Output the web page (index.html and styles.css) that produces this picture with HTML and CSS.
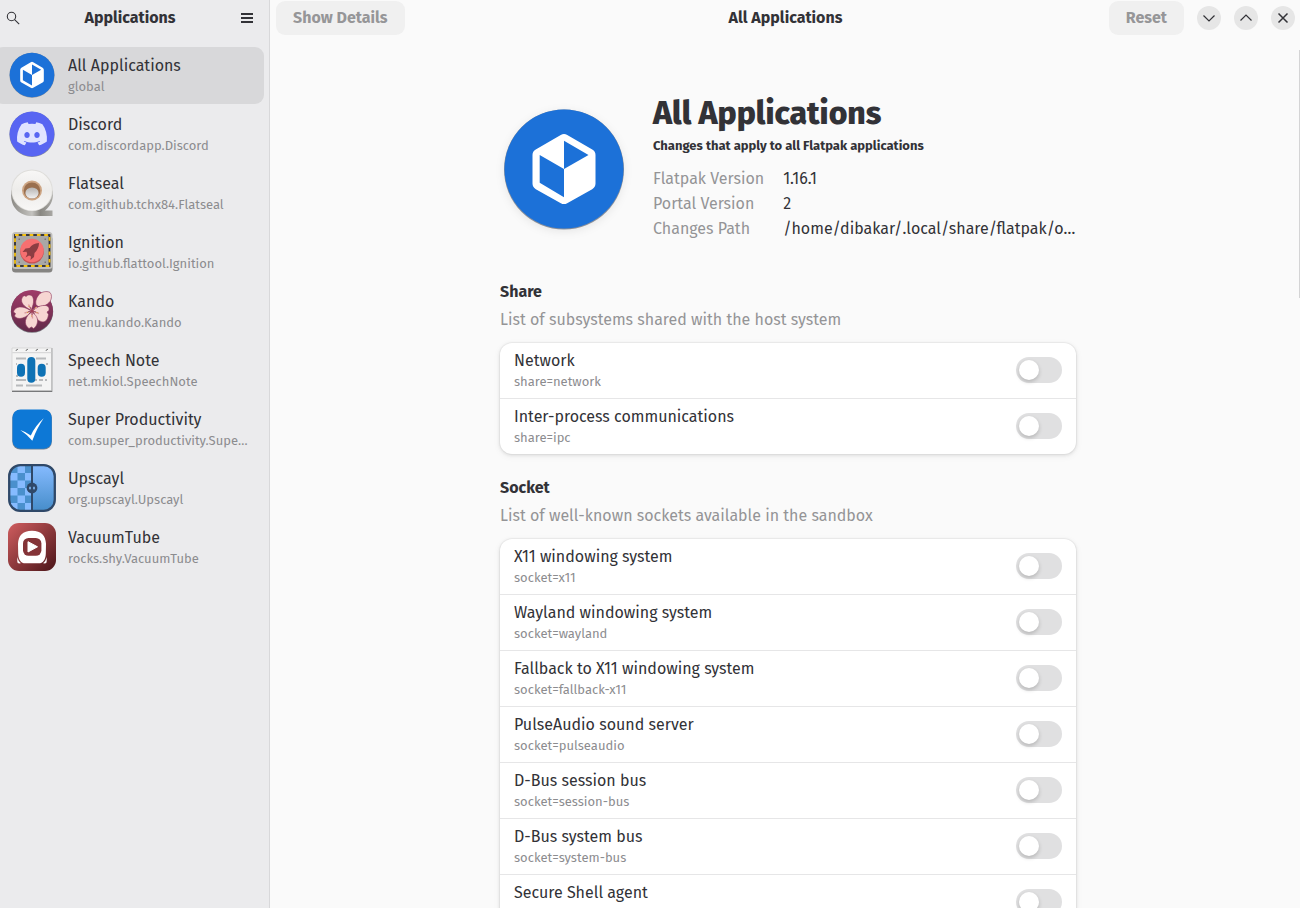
FILE: index.html
```html
<!DOCTYPE html>
<html lang="en">
<head>
    <meta charset="UTF-8">
    <meta name="viewport" content="width=device-width, initial-scale=1.0">
    <title>Flatseal</title>
    <link rel="stylesheet" href="styles.css">
</head>
<body>
    <svg class="defs" aria-hidden="true">
        <defs>
            <symbol id="flatpak" viewBox="0 0 128 128">
                <circle cx="64" cy="64.500" r="60" fill="#8a8f98"/>
                <circle cx="64" cy="64" r="59.5" fill="#1c71d8"/>
                <path d="M64 35.5 89 50v28.5L64 92.5 39 78.5V50z" fill="#fff" stroke="#fff" stroke-width="13" stroke-linejoin="round"/>
                <path d="M64 35.7 88.5 50 64 64zM39.7 50 64 64v28.3L39.7 77.7z" fill="#1c71d8"/>
            </symbol>
        </defs>
    </svg>

    <div class="window">
        <aside class="sidebar">
            <header class="sidebar-header">
                <button class="icon-btn" aria-label="Search">
                    <svg width="16" height="16" viewBox="0 0 16 16" fill="none" stroke="#323237" stroke-width="1.1"><circle cx="6.5" cy="6.5" r="4.2"/><path d="m9.6 9.6 4.6 4.6"/></svg>
                </button>
                <h2>Applications</h2>
                <button class="icon-btn" aria-label="Menu">
                    <svg width="16" height="16" viewBox="0 0 16 16" fill="#323237"><path d="M2 3h12v2H2zM2 7h12v2H2zM2 11h12v2H2z"/></svg>
                </button>
            </header>
            <nav class="app-list">
                <a class="app selected" href="#">
                    <svg class="app-icon" viewBox="0 0 48 48"><use href="#flatpak"/></svg>
                    <span class="labels"><span class="name">All Applications</span><span class="sub">global</span></span>
                </a>
                <a class="app" href="#">
                    <svg class="app-icon" viewBox="0 0 48 48">
                        <circle cx="24" cy="24.4" r="22.6" fill="#8a8f98"/>
                        <circle cx="24" cy="24" r="22.4" fill="#5865f2"/>
                        <path transform="translate(9 8.8) scale(1.25)" fill="#e0e3ff" d="M20.317 4.37a19.8 19.8 0 0 0-4.885-1.515.074.074 0 0 0-.079.037c-.21.375-.444.865-.608 1.25a18.3 18.3 0 0 0-5.487 0c-.163-.394-.405-.875-.617-1.25a.077.077 0 0 0-.079-.037A19.7 19.7 0 0 0 3.677 4.37a.07.07 0 0 0-.032.027C.533 9.046-.319 13.58.099 18.058a.082.082 0 0 0 .031.056c2.053 1.508 4.041 2.423 5.993 3.03a.078.078 0 0 0 .084-.028c.462-.63.873-1.295 1.226-1.994a.076.076 0 0 0-.042-.106 13 13 0 0 1-1.872-.892.077.077 0 0 1-.008-.128c.126-.094.252-.192.372-.291a.074.074 0 0 1 .078-.011c3.928 1.793 8.18 1.793 12.061 0a.074.074 0 0 1 .079.01c.12.099.246.198.373.292a.077.077 0 0 1-.007.128 12.3 12.3 0 0 1-1.873.891.077.077 0 0 0-.041.107c.36.698.772 1.363 1.225 1.993a.076.076 0 0 0 .084.029c1.961-.607 3.95-1.522 6.003-3.03a.077.077 0 0 0 .031-.055c.5-5.177-.838-9.674-3.549-13.66a.061.061 0 0 0-.03-.029zM8.02 15.331c-1.183 0-2.157-1.086-2.157-2.419s.955-2.419 2.157-2.419c1.21 0 2.176 1.095 2.157 2.419 0 1.333-.956 2.419-2.157 2.419zm7.975 0c-1.183 0-2.157-1.086-2.157-2.419s.955-2.419 2.157-2.419c1.21 0 2.176 1.095 2.157 2.419 0 1.333-.946 2.419-2.157 2.419z"/>
                    </svg>
                    <span class="labels"><span class="name">Discord</span><span class="sub">com.discordapp.Discord</span></span>
                </a>
                <a class="app" href="#">
                    <svg class="app-icon" viewBox="0 0 48 48">
                        <defs>
                            <linearGradient id="tape"><stop offset="0" stop-color="#8b8984"/><stop offset=".5" stop-color="#c4c3c0"/><stop offset=".7" stop-color="#888681"/><stop offset="1" stop-color="#a9a8a4"/></linearGradient>
                            <linearGradient id="roll" x2="0" y2="1"><stop offset="0" stop-color="#f8f7f6"/><stop offset=".5" stop-color="#edecea"/><stop offset="1" stop-color="#f8f7f6"/></linearGradient>
                            <linearGradient id="hole" x2="0" y2="1"><stop offset="0" stop-color="#b5b2b0"/><stop offset="1" stop-color="#f2f2f3"/></linearGradient>
                        </defs>
                        <path d="M3.200 21v6c0 12 9 20 21 20h20.300v-5.500H37c5-4 7.800-9 7.800-15v-5z" fill="url(#tape)"/>
                        <circle cx="24" cy="21.300" r="20.800" fill="#deddda"/>
                        <circle cx="24" cy="21.500" r="19.900" fill="url(#roll)"/>
                        <circle cx="24" cy="21.500" r="10" fill="#cda583"/>
                        <circle cx="24" cy="21.700" r="8.300" fill="#9a6f4e"/>
                        <ellipse cx="24" cy="24" rx="6.600" ry="5.600" fill="url(#hole)"/>
                    </svg>
                    <span class="labels"><span class="name">Flatseal</span><span class="sub">com.github.tchx84.Flatseal</span></span>
                </a>
                <a class="app" href="#">
                    <svg class="app-icon" viewBox="0 0 48 48">
                        <rect x="4" y="8" width="40.500" height="36.500" rx="3.500" fill="#858482"/>
                        <rect x="4" y="4" width="40.500" height="37" rx="3.500" fill="#c0bfbc"/>
                        <rect x="7" y="7" width="34.500" height="31" fill="#a9a8a6" stroke="#2f2d31" stroke-width="1.800"/>
                        <rect x="7" y="7" width="34.500" height="31" fill="none" stroke="#f5c211" stroke-width="1.800" stroke-dasharray="3.700 3.600"/>
                        <path d="M10.500 10.500H12V12h-1.500zM36.500 10.500H38V12h-1.500zM10.500 33.500H12V35h-1.500zM36.500 33.500H38V35h-1.500z" fill="#77757a"/>
                        <circle cx="24" cy="23.800" r="11.800" fill="#c75052"/>
                        <circle cx="24" cy="22.500" r="11.700" fill="#f66f70"/>
                        <path d="M31 15c-4.500.2-7.500 2-9.500 5l-4 .5-3 3.500 4-.3.800 2.300-1.800 3.500 3.500-2 2 1-.5 3.500 3.500-3 .5-4c2.700-2.500 4.500-6 4.500-10z" fill="#8d3d42"/>
                    </svg>
                    <span class="labels"><span class="name">Ignition</span><span class="sub">io.github.flattool.Ignition</span></span>
                </a>
                <a class="app" href="#">
                    <svg class="app-icon" viewBox="0 0 48 48">
                        <defs><linearGradient id="plum" x2="0" y2="1"><stop offset="0" stop-color="#a03c69"/><stop offset="1" stop-color="#622a49"/></linearGradient></defs>
                        <circle cx="24" cy="24.600" r="21.200" fill="#77757c"/>
                        <circle cx="24" cy="24" r="21" fill="url(#plum)"/>
                        <g fill="#f7d6d2" stroke="#8b365c" stroke-width=".6">
                            <path d="M23 23c-7-3-11-8-9-12 1-2.500 3-3 4-1.500C19 8 22 7 24.500 9.500c2 3.500 1 8.500-1.500 13.500z"/>
                            <path d="M28 17.500c-1-4 1-8 4-11 4-2.500 8-2.300 10-1 2 2 2 6 0 9-3 4-8 5.500-12 5z"/>
                            <path d="M25 24c3-4 8-6 13-5.500 2.500.5 3.500 2.500 3 5l-2 1.500 1.500 2.500c-.5 4-2 7-5.500 7.500-5-.5-8.500-5-10-11z"/>
                            <path d="M24 25c4 3 6 6 5.500 10-.5 3-2 5.500-4 6.500l-2-1.500-2.500 1.500c-3-2-4-5-3.500-8 1-4 3-6.500 6.500-8.500z"/>
                            <path d="M23 24c-4-3-9-5-13.500-3.500-2.500 1-3.500 2.500-4 4.500l2 1.500-1 2.500c1.500 2.500 5 3 8 2 4-1 7-4 8.500-7z"/>
                        </g>
                        <path d="m24 24-3.500-6.500m3.500 6.500 5-4m-5 4 7 2.500m-7-2.500.5 7.500m-.5-7.500-7.500 2" stroke="#dc9ca2" stroke-width="1.400" fill="none"/>
                        <path d="m24 24-2-4m2 4 3-2.500m-3 2.500 4 1m-4-1v4m0-4-4 .8m4-.8 2.500 3m-2.500-3-3 3" stroke="#8a3d55" stroke-width=".8" fill="none"/>
                        <circle cx="24" cy="24" r="1.600" fill="#a33f57"/>
                        <path d="M20.500 19h1v1h-1zM27 20h1v1h-1zM28.500 25h1v1h-1zM23 28.500h1v1h-1zM19 25h1v1h-1z" fill="#d79b3d"/>
                    </svg>
                    <span class="labels"><span class="name">Kando</span><span class="sub">menu.kando.Kando</span></span>
                </a>
                <a class="app" href="#">
                    <svg class="app-icon" viewBox="0 0 48 48">
                        <path d="M4 2h40.300v44H4z" fill="#77787a"/>
                        <path d="M4 2h39.500v42.500H4z" fill="#f4f4f4" stroke="#c9c9ca" stroke-width=".6"/>
                        <path d="M4.300 6.700h39" stroke="#d2d2d3"/>
                        <path d="M8 5q0-1.700 2-1.700M18 5q0-1.700 2-1.700M28 5q0-1.700 2-1.700M38 5q0-1.700 2-1.700" stroke="#77787a" stroke-width="1" fill="none"/>
                        <path d="M8 12.500h10M28 12.500h10M8 34h10M21 34h8M31 34h4M37 34h2M8 39.500h7M18 39.500h16M8 18h1M38 18h2M8 30h2" stroke="#b8babc" stroke-width="2"/>
                        <rect x="9" y="17.700" width="8" height="13" rx="4" fill="#0e72b5"/>
                        <rect x="19.300" y="11" width="8" height="25.700" rx="4" fill="#0e72b5"/>
                        <rect x="29.700" y="17.700" width="8" height="13" rx="4" fill="#0e72b5"/>
                    </svg>
                    <span class="labels"><span class="name">Speech Note</span><span class="sub">net.mkiol.SpeechNote</span></span>
                </a>
                <a class="app" href="#">
                    <svg class="app-icon" viewBox="0 0 48 48">
                        <rect x="4.300" y="5" width="39.600" height="39.500" rx="8" fill="#6f8195"/>
                        <rect x="4.500" y="4.500" width="39.200" height="39.200" rx="8" fill="#0d78d6"/>
                        <path d="M12.300 25q6 2 10.500 5.500Q27 21 35.700 13.300 29 23 24.300 35.700 19 29.500 12.300 25z" fill="#fff"/>
                    </svg>
                    <span class="labels"><span class="name">Super Productivity</span><span class="sub">com.super_productivity.SuperProductivity</span></span>
                </a>
                <a class="app" href="#">
                    <svg class="app-icon" viewBox="0 0 48 48">
                        <defs>
                            <linearGradient id="sky" x2="0" y2="1"><stop offset="0" stop-color="#86bbff"/><stop offset="1" stop-color="#468dca"/></linearGradient>
                            <clipPath id="pane"><path d="M24 1.500H12A10.500 10.500 0 0 0 1.500 12v24A10.500 10.500 0 0 0 12 46.500h12z"/></clipPath>
                        </defs>
                        <rect x="1.200" y="1.200" width="45.600" height="45.600" rx="11" fill="url(#sky)"/>
                        <g clip-path="url(#pane)">
                            <path d="M0 0h24v48H0z" fill="#4a90cd"/>
                            <path d="M9.500 1.500H17V9H9.500zM2 9h7.500v7.500H2zM17 9h7v7.500h-7zM9.500 16.500H17V24H9.500zM2 24h7.500v7.500H2zM17 24h7v7.500h-7zM9.500 31.500H17V39H9.500zM2 39h7.500v7.500H2zM17 39h7v7.500h-7z" fill="#86bbff"/>
                        </g>
                        <path d="M24 1v46" stroke="#2f4868" stroke-width="2"/>
                        <rect x="1.200" y="1.200" width="45.600" height="45.600" rx="11" fill="none" stroke="#2f4868" stroke-width="2.300"/>
                        <circle cx="24" cy="24" r="5.400" fill="#2f4868"/>
                        <ellipse cx="22" cy="24" rx="1" ry="1.600" fill="#79aee6"/>
                        <ellipse cx="26" cy="24" rx="1" ry="1.600" fill="#79aee6"/>
                    </svg>
                    <span class="labels"><span class="name">Upscayl</span><span class="sub">org.upscayl.Upscayl</span></span>
                </a>
                <a class="app" href="#">
                    <svg class="app-icon" viewBox="0 0 48 48">
                        <defs><linearGradient id="brick" x2="1" y2="1"><stop offset="0" stop-color="#d05d5f"/><stop offset="1" stop-color="#4b1519"/></linearGradient></defs>
                        <rect width="48" height="48" rx="11" fill="url(#brick)"/>
                        <path d="M24 7.700c9.500 0 13.500 5 14 13l-.2 10c-.2 6-3 9.600-7 9.600H17.200c-4 0-6.800-3.600-7-9.600l-.2-10c.5-8 4.500-13 14-13z" fill="#fff"/>
                        <path d="M9.500 34c-.5 3-.3 5.500.5 6.300 1 .2 2 .2 3 0-2-1.500-3-3.500-3.500-6.300zM38.500 34c.5 3 .3 5.500-.5 6.300-1 .2-2 .2-3 0 2-1.500 3-3.500 3.500-6.300z" fill="#fff"/>
                        <rect x="15" y="15" width="18.400" height="17.800" rx="5.500" fill="#843337"/>
                        <path d="m20 18.700 9.500 5.100L20 29z" fill="#fff" stroke="#fff" stroke-linejoin="round"/>
                    </svg>
                    <span class="labels"><span class="name">VacuumTube</span><span class="sub">rocks.shy.VacuumTube</span></span>
                </a>
            </nav>
        </aside>

        <main class="content">
            <header class="content-header">
                <div class="side"><button class="text-btn" disabled>Show Details</button></div>
                <h2>All Applications</h2>
                <div class="side end">
                    <button class="text-btn" disabled>Reset</button>
                    <button class="round-btn" aria-label="Minimize"><svg viewBox="0 0 24 24"><path d="m6.500 9.500 5.500 5.500 5.500-5.500"/></svg></button>
                    <button class="round-btn" aria-label="Maximize"><svg viewBox="0 0 24 24"><path d="M6.500 14.500 12 9l5.500 5.500"/></svg></button>
                    <button class="round-btn" aria-label="Close"><svg viewBox="0 0 24 24"><path stroke-width="1.500" d="m7.500 7.500 9 9m0-9-9 9"/></svg></button>
                </div>
            </header>

            <div class="page">
                <section class="app-info">
                    <svg class="big-icon" viewBox="0 0 128 128"><use href="#flatpak"/></svg>
                    <div class="info">
                        <h1>All Applications</h1>
                        <p class="tagline">Changes that apply to all Flatpak applications</p>
                        <dl>
                            <dt>Flatpak Version</dt><dd>1.16.1</dd>
                            <dt>Portal Version</dt><dd>2</dd>
                            <dt>Changes Path</dt><dd>/home/dibakar/.local/share/flatpak/overrides/global</dd>
                        </dl>
                    </div>
                </section>

                <section class="group">
                    <h3>Share</h3>
                    <p class="desc">List of subsystems shared with the host system</p>
                    <div class="card">
                        <label class="row"><span class="labels"><span class="name">Network</span><span class="sub">share=network</span></span><input type="checkbox" class="switch"></label>
                        <label class="row"><span class="labels"><span class="name">Inter-process communications</span><span class="sub">share=ipc</span></span><input type="checkbox" class="switch"></label>
                    </div>
                </section>

                <section class="group">
                    <h3>Socket</h3>
                    <p class="desc">List of well-known sockets available in the sandbox</p>
                    <div class="card">
                        <label class="row"><span class="labels"><span class="name">X11 windowing system</span><span class="sub">socket=x11</span></span><input type="checkbox" class="switch"></label>
                        <label class="row"><span class="labels"><span class="name">Wayland windowing system</span><span class="sub">socket=wayland</span></span><input type="checkbox" class="switch"></label>
                        <label class="row"><span class="labels"><span class="name">Fallback to X11 windowing system</span><span class="sub">socket=fallback-x11</span></span><input type="checkbox" class="switch"></label>
                        <label class="row"><span class="labels"><span class="name">PulseAudio sound server</span><span class="sub">socket=pulseaudio</span></span><input type="checkbox" class="switch"></label>
                        <label class="row"><span class="labels"><span class="name">D-Bus session bus</span><span class="sub">socket=session-bus</span></span><input type="checkbox" class="switch"></label>
                        <label class="row"><span class="labels"><span class="name">D-Bus system bus</span><span class="sub">socket=system-bus</span></span><input type="checkbox" class="switch"></label>
                        <label class="row"><span class="labels"><span class="name">Secure Shell agent</span><span class="sub">socket=ssh-auth</span></span><input type="checkbox" class="switch"></label>
                    </div>
                </section>
            </div>
            <div class="scroll-thumb"></div>
        </main>
    </div>
</body>
</html>
```

FILE: styles.css
```css
* {
    box-sizing: border-box;
}
body {
    margin: 0;
    background-color: #fafafa;
    color: #323237;
    font-family: "Fira Sans", "Noto Sans", sans-serif;
    font-size: 16px;
    line-height: 20px;
}
h1, h2, h3, p, dl, dd {
    margin: 0;
}
button {
    border: none;
    padding: 0;
    font: inherit;
    color: inherit;
    background: none;
}
svg {
    display: block;
}
.defs {
    position: absolute;
    width: 0;
    height: 0;
}
.window {
    display: flex;
    height: 100vh;
    overflow: hidden;
}

/* sidebar */
.sidebar {
    flex: none;
    width: 270px;
    background-color: #ebebed;
    border-right: 1px solid #d8d8da;
}
.sidebar-header {
    display: flex;
    align-items: center;
    justify-content: space-between;
    height: 35px;
    margin-bottom: 12px;
    padding: 0 14px 0 5px;
}
h2, h3 {
    font-size: 16px;
    font-weight: 700;
}
.app {
    display: flex;
    align-items: center;
    gap: 12px;
    height: 57px;
    margin: 0 5px 2px -6px;
    padding: 0 12px 1px 14px;
    border-radius: 9px;
    color: inherit;
    text-decoration: none;
}
.app.selected {
    background-color: #d8d8da;
}
.app-icon {
    flex: none;
    width: 48px;
    height: 48px;
}
.labels {
    flex: 1;
    min-width: 0;
    padding-top: 2px;
}
.name, .sub {
    display: block;
    overflow: hidden;
    text-overflow: ellipsis;
    white-space: nowrap;
}
.name {
    line-height: 22px;
}
.sub {
    font-size: 13px;
    color: #8c8c8f;
}

/* content */
.content {
    flex: 1;
    min-width: 0;
    display: flex;
    flex-direction: column;
    position: relative;
    padding-left: 6px;
}
.content-header {
    display: flex;
    align-items: center;
    flex: none;
    height: 35px;
}
.side {
    flex: 1;
    display: flex;
    align-items: center;
}
.side.end {
    justify-content: flex-end;
    gap: 13px;
    margin-right: 5px;
}
.side.end {
    margin-right: 0;
    padding-right: 5px;
}
.text-btn {
    height: 34px;
    padding: 0 17px;
    border-radius: 9px;
    background-color: #f0f0f0;
    color: #969698;
    font-weight: 700;
}
.round-btn {
    width: 24px;
    height: 24px;
    border-radius: 50%;
    background-color: #e6e6e6;
}
.round-btn svg {
    fill: none;
    stroke: #323237;
    stroke-width: 1.2;
}
.page {
    flex: 1;
    min-height: 0;
    overflow-y: auto;
    scrollbar-width: none;
    padding: 58px 24px 24px;
}
.app-info, .group {
    max-width: 576px;
    margin: 0 auto;
}
.app-info {
    display: flex;
    align-items: center;
    gap: 25px;
    margin-bottom: 37px;
}
.big-icon {
    flex: none;
    width: 128px;
    height: 128px;
    filter: drop-shadow(0 2px 4px rgba(0, 0, 0, 0.08));
}
.info {
    flex: 1;
    min-width: 0;
    padding-bottom: 4px;
}
h1 {
    font-size: 32px;
    line-height: 40px;
    font-weight: 800;
}
.tagline {
    margin: 3px 0 10px;
    font-size: 13px;
    font-weight: 700;
}
dl {
    display: grid;
    grid-template-columns: auto 1fr;
    column-gap: 19px;
    line-height: 25px;
}
dt, .desc {
    color: #949496;
}
dd {
    overflow: hidden;
    text-overflow: ellipsis;
    white-space: nowrap;
}
.group {
    margin-bottom: 24px;
}
.desc {
    margin: 8px 0 13px;
}
.card {
    border-radius: 12px;
    background-color: #fff;
    box-shadow: 0 0 0 1px rgba(0, 0, 0, 0.03), 0 1px 3px 1px rgba(0, 0, 0, 0.07), 0 2px 6px 2px rgba(0, 0, 0, 0.03);
}
.row {
    display: flex;
    align-items: center;
    height: 55px;
    padding: 0 14px 1px;
}
.row + .row {
    height: 56px;
    border-top: 1px solid #e6e6e7;
}
.switch {
    appearance: none;
    flex: none;
    width: 46px;
    height: 26px;
    margin: 0;
    padding: 3px;
    border-radius: 13px;
    background-color: #e0e0e1;
}
.switch::before {
    content: "";
    display: block;
    width: 20px;
    height: 20px;
    border-radius: 50%;
    background-color: #fff;
    box-shadow: 0 2px 4px rgba(0, 0, 0, 0.2);
}
.switch:checked {
    background-color: #1c71d8;
}
.switch:checked::before {
    margin-left: 20px;
}
.scroll-thumb {
    position: absolute;
    top: 50px;
    right: 0;
    width: 1px;
    height: 248px;
    background-color: #d4d4d5;
}
```
